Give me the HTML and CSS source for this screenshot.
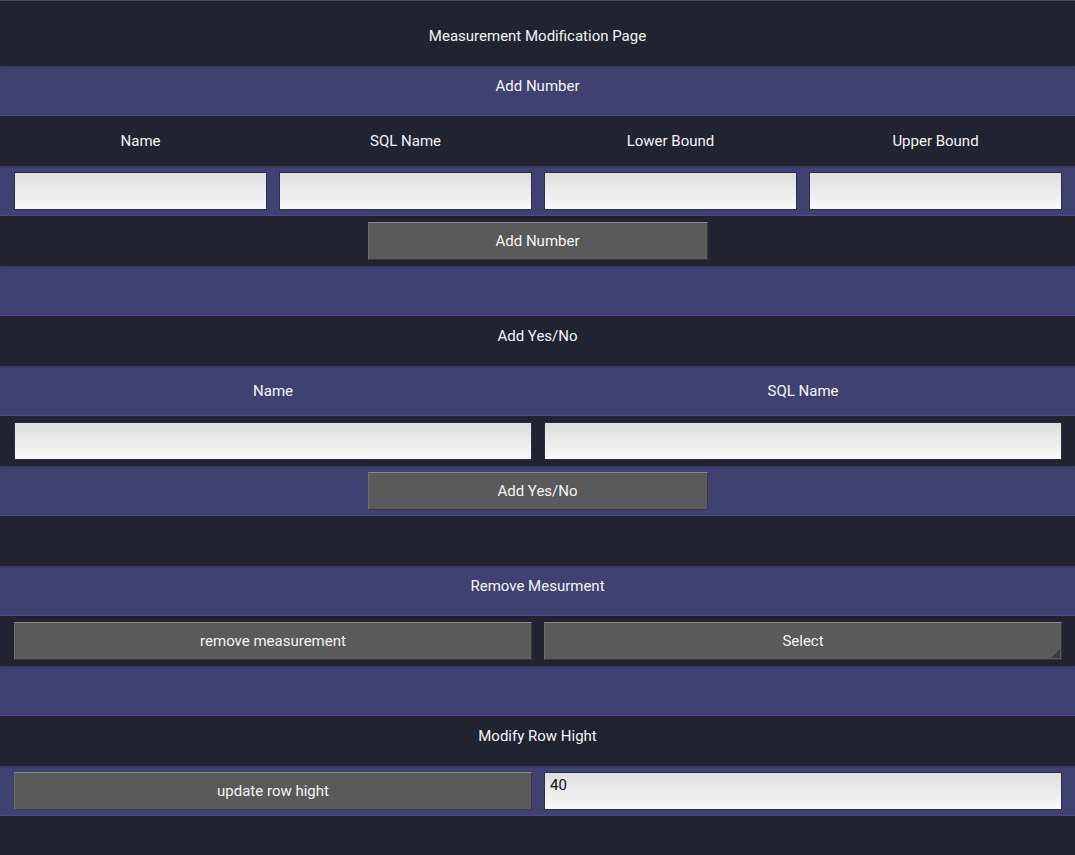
FILE: index.html
```html
<!DOCTYPE html>
<html lang="en">
<head>
    <meta charset="UTF-8">
    <meta name="viewport" content="width=device-width, initial-scale=1.0">
    <title>Measurement Modification Page</title>
    <link rel="stylesheet" href="styles.css">
</head>
<body>
    <div class="page">
        <div class="row dark title">Measurement Modification Page</div>

        <!-- Add number -->
        <div class="row blue heading">Add Number</div>
        <div class="row dark cols-4">
            <span>Name</span>
            <span>SQL Name</span>
            <span>Lower Bound</span>
            <span>Upper Bound</span>
        </div>
        <div class="row blue cols-4">
            <input type="text" class="field">
            <input type="text" class="field">
            <input type="text" class="field">
            <input type="text" class="field">
        </div>
        <div class="row dark">
            <button class="btn btn-center">Add Number</button>
        </div>
        <div class="row blue"></div>

        <!-- Add yes/no -->
        <div class="row dark heading">Add Yes/No</div>
        <div class="row blue cols-2">
            <span>Name</span>
            <span>SQL Name</span>
        </div>
        <div class="row dark cols-2">
            <input type="text" class="field">
            <input type="text" class="field">
        </div>
        <div class="row blue">
            <button class="btn btn-center">Add Yes/No</button>
        </div>
        <div class="row dark"></div>

        <!-- Remove -->
        <div class="row blue heading">Remove Mesurment</div>
        <div class="row dark cols-2">
            <button class="btn">remove measurement</button>
            <button class="btn select">Select</button>
        </div>
        <div class="row blue"></div>

        <!-- Row height -->
        <div class="row dark heading">Modify Row Hight</div>
        <div class="row blue cols-2">
            <button class="btn">update row hight</button>
            <input type="text" class="field value" value="40">
        </div>
        <div class="row dark last"></div>
    </div>
</body>
</html>
```

FILE: styles.css
```css
body {
    margin: 0;
    padding: 0;
    background-color: #212331;
    font-family: Roboto, "Noto Sans", sans-serif;
    font-size: 15px;
    color: #f4f4f8;
    overflow: hidden;
}
.page {
    border-top: 1px solid #4a4c5c;
}
.row {
    height: 50px;
    display: flex;
    align-items: center;
    justify-content: center;
    box-sizing: border-box;
    position: relative;
}
.dark {
    background-color: #212331;
}
.blue {
    background-color: #3f4270;
    box-shadow: inset 0 -2px 1px -1px #4b4c86, inset 0 2px 2px -1px #35375c;
}
.title {
    height: 65px;
    padding-top: 4px;
}
.heading {
    padding-bottom: 10px;
}
.last {
    height: 40px;
}
.cols-4,
.cols-2 {
    display: grid;
    column-gap: 12px;
    padding: 0 13px 0 14px;
    justify-items: stretch;
    text-align: center;
}
.cols-4 {
    grid-template-columns: repeat(4, 1fr);
}
.cols-2 {
    grid-template-columns: repeat(2, 1fr);
}
.field {
    height: 38px;
    margin: 0;
    box-sizing: border-box;
    border: 1px solid #2c2e48;
    background: linear-gradient(#dedede, #f9f9f9);
    font-family: Roboto, sans-serif;
    font-size: 15px;
    color: #111;
    padding: 0 5px;
}
.value {
    padding: 0 5px 12px;
}
.btn {
    height: 38px;
    box-sizing: border-box;
    background-color: #5a5a5a;
    color: #f4f4f4;
    font-family: Roboto, sans-serif;
    font-size: 15px;
    border: 1px solid #3a3a40;
    border-top-color: #8a8a8a;
    border-left-color: #6e6e6e;
    padding: 0;
}
.btn-center {
    width: 340px;
}
.select {
    position: relative;
}
.select::after {
    content: "";
    position: absolute;
    right: 1px;
    bottom: 1px;
    border-style: solid;
    border-width: 0 0 9px 9px;
    border-color: transparent transparent #3c3c42 transparent;
}
```
